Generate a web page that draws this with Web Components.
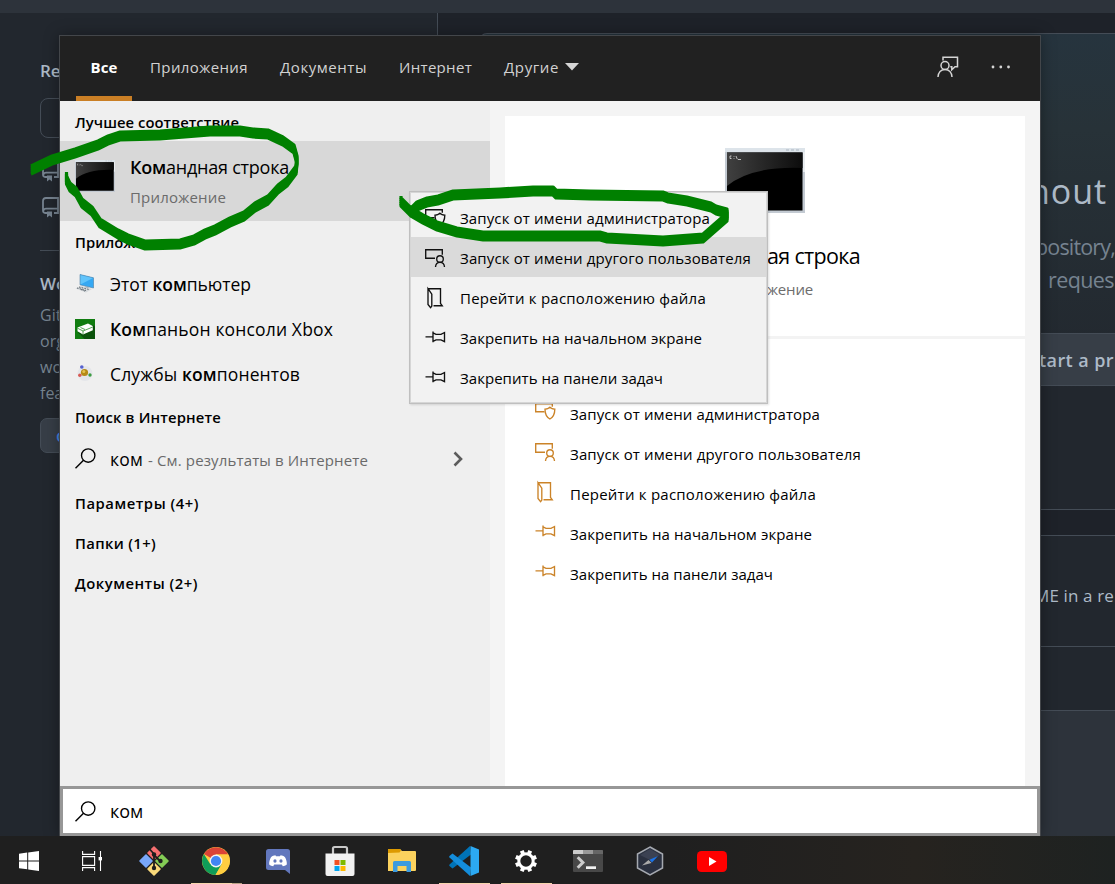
<!DOCTYPE html>
<html lang="ru">
<head>
<meta charset="utf-8">
<title>Поиск</title>
<style>
  html, body { margin: 0; height: 100%; overflow: hidden; background: #22272e; }
  body { font-family: "Open Sans", "Noto Sans", sans-serif; font-size: 15px; }
</style>
</head>
<body>
<desktop-view></desktop-view>
<script>
const fits = [];
function define(name, html, init) {
  const t = document.createElement('template');
  t.innerHTML = html;
  customElements.define(name, class extends HTMLElement {
    constructor() {
      super();
      this.attachShadow({ mode: 'open' }).appendChild(t.content.cloneNode(true));
    }
    connectedCallback() { if (init) init.call(this, this.shadowRoot); }
  });
}

/* Icon set */
const ICONS = {
  admin: [21, 21, '<g class="l"><path d="M9.500 9.700H.7V1.700h16.600v3"/><path d="M10 7.200c2 0 3.600-.6 4.900-1.900 1.300 1.300 2.900 1.900 4.900 1.900 0 5-1.200 7.700-4.900 9.800C11.200 14.900 10 12.200 10 7.200z"/></g>'],
  user: [21, 21, '<g class="l"><path d="M10 10.200H.7V1.700h16.600v5"/><circle cx="15" cy="11" r="3.300"/><path d="M10.500 19c.2-3 1.900-4.600 4.500-4.600s4.300 1.600 4.500 4.600"/></g>'],
  folder: [21, 21, '<g class="l"><path d="M3 .7h12.500v14.800l1.700 2.200H8.500M3 .7l3.800 5.400v12l-1.200 1.500L3 16.500z"/></g>'],
  pin: [21, 21, '<g class="l"><path d="M.5 8.900h7.500M8 3.600v10.600M8 4.900l3 1.400h5l3.500-1.800v9.200l-3.500-1.800h-5l-3 1.400"/></g>'],
  search: [21, 21, '<g class="l"><circle cx="13.200" cy="7.500" r="6.700"/><path d="M8.500 12.300L.5 20.300"/></g>'],
  chevron: [10, 16, '<path d="M1.500 1.500L8 8l-6.500 6.500" fill="none" stroke="#5c5c5c" stroke-width="2.600"/>'],
  caret: [14, 8, '<path d="M0 0h14L7 7.500z" fill="#d6d6d6"/>'],
  feedback: [22, 22, '<g fill="none" stroke="#d5d5d5" stroke-width="1.500"><path d="M6 4.500V1.300h14.500v9.400h-2.500l-3.200 3v-3h-1.500"/><circle cx="8" cy="9.500" r="4"/><path d="M1 21c.3-4.500 3-7.500 7-7.500s6.700 3 7 7.500"/></g>'],
  dots: [20, 4, '<g fill="#d5d5d5"><circle cx="2" cy="2" r="1.400"/><circle cx="9.800" cy="2" r="1.400"/><circle cx="17.500" cy="2" r="1.400"/></g>'],
  repo: [18, 22, '<g fill="none" stroke="#768390" stroke-width="1.800"><path d="M5 16H3.200C1.500 16 1 15 1 13.500V4c0-2 1-3 3-3h12v15h-4M1.500 13.500c.5-1.300 1.300-1.800 2.500-1.800h12"/></g><path d="M5 14.500h5v6l-2.500-2L5 20.500z" fill="#768390"/>'],
  pc: [20, 20, '<path d="M5 .5l13.500 3.300V14L5 10.800z" fill="#35a8f3"/><path d="M5 .5l13.500 3.300-13.500 7z" fill="#61c4fb"/><path d="M5 .5l13.500 3.300V14L5 10.800z" fill="none" stroke="#4b7da6" stroke-width=".6"/><path d="M10 12.500l4 1-2 2.500-3-1z" fill="#9aa6b0"/><path d="M.5 14.500L6 12l11 3-6 3.500z" fill="#d5d9dc"/><path d="M2 14l9 2.500M4 13l10 2.500M6 15.500l5 2" stroke="#59636b" stroke-width="1" stroke-dasharray="1.500 1.300"/>'],
  xbox: [20, 20, '<path d="M0 0h20v20H0z" fill="#107c10"/><path d="M3 13.500l6.500 6.500H20V7.500L17.500 6z" fill="#0a520b"/><path d="M2.500 8.500L13 4.500l4.800 2.400v4.300L8 15.500l-5.500-3.200z" fill="#fff"/><path d="M2.500 9.200L8 12l9.800-4M8 12v3.500M5.500 8.500l4.500 2" stroke="#107c10" stroke-width=".7" fill="none"/>'],
  com: [20, 20, '<circle cx="10" cy="9.500" r="7.500" fill="#e4e6ea"/><circle cx="9.500" cy="8.500" r="3.600" fill="#b58a16"/><circle cx="8.800" cy="7.500" r="1.500" fill="#e5c24e"/><circle cx="6.800" cy="3" r="1.800" fill="#5560cf"/><circle cx="4.800" cy="11.300" r="1.700" fill="#d85a53"/><circle cx="15" cy="11" r="1.700" fill="#3d9c42"/>'],
  win: [20, 20, '<path d="M0 2.800L8.200 1.600v7.900H0zM9.200 1.400L20 0v9.500H9.200zM0 10.500h8.200v7.800L0 17.200zM9.200 10.500H20V20L9.200 18.500z" fill="#fff"/>'],
  task: [20, 20, '<g fill="none" stroke="#fff" stroke-width="1.100"><path d="M.6 0v3.400h12V0M.6 20v-3.400h12V20M.6 5.600h12v8.800H.6zM18.500 0v20"/></g><path d="M16.600 6h3.400v3.400h-3.400z" fill="#fff"/>'],
  git: [30, 30, '<g stroke-linejoin="round" stroke-width="1.600"><path d="M15 1l6 6-6 6-6-6z" fill="#f66f70" stroke="#f66f70"/><path d="M7 9l6 6-6 6-6-6z" fill="#79a8fa" stroke="#79a8fa"/><path d="M23 9l6 6-6 6-6-6z" fill="#84cc55" stroke="#84cc55"/><path d="M15 17l6 6-6 6-6-6z" fill="#fad97a" stroke="#fad97a"/></g><path d="M10.500 3l4.500 5v14M15 9l6 6" stroke="#1e1e1e" stroke-width="1.800" fill="none"/><circle cx="15" cy="8.500" r="2.200" fill="#1e1e1e"/><circle cx="15" cy="22" r="2.200" fill="#1e1e1e"/><circle cx="21.500" cy="15" r="2.200" fill="#1e1e1e"/>'],
  chrome: [28, 28, '<circle cx="14" cy="14" r="14" fill="#ffcd40"/><path d="M14 14L1.900 7A14 14 0 0 1 26.100 7.500H14z" fill="#db4437"/><path d="M1.900 7A14 14 0 0 0 13.500 28l6.200-10.700L14 14l-5.700 3.300z" fill="#0f9d58"/><path d="M14 7.500h12.100A14 14 0 0 1 13.500 28l6.200-10.800z" fill="#ffcd40"/><circle cx="14" cy="14" r="6.400" fill="#f4f4f4"/><circle cx="14" cy="14" r="5.100" fill="#4285f4"/>'],
  discord: [24, 25, '<path d="M2.500 0h19A2.500 2.500 0 0 1 24 2.500V25l-5-4H2.500A2.500 2.500 0 0 1 0 18.500v-16A2.500 2.500 0 0 1 2.500 0z" fill="#6277bd"/><path d="M5 8.200C6.500 6.800 8 6.400 9.400 6.200l.6 1.100h4l.6-1.100c1.400.2 2.900.6 4.400 2 1.400 2.500 2 5 1.800 7.300-1.300 1.100-2.700 1.600-4 1.700l-1-1.600H8.200l-1 1.600c-1.300-.1-2.700-.6-4-1.700C3 13.200 3.600 10.700 5 8.200z" fill="#fff"/><ellipse cx="9" cy="12" rx="1.600" ry="1.800" fill="#6277bd"/><ellipse cx="15" cy="12" rx="1.600" ry="1.800" fill="#6277bd"/>'],
  store: [30, 30, '<path d="M8 9V2.500Q8 1 9.500 1h11Q22 1 22 2.500V9" fill="none" stroke="#c9c9c9" stroke-width="2.200"/><path d="M.5 7.500h29V28a2 2 0 0 1-2 2h-25a2 2 0 0 1-2-2z" fill="#f1f1f1"/><path d="M9.500 14h5v5h-5z" fill="#f25022"/><path d="M15.500 14h5v5h-5z" fill="#7fba00"/><path d="M9.500 20h5v5h-5z" fill="#00a4ef"/><path d="M15.500 20h5v5h-5z" fill="#ffb900"/>'],
  files: [28, 24, '<path d="M0 2V1q0-1 1-1h11l2 2h13q1 0 1 1v18q0 1-1 1H0z" fill="#fbd25e"/><path d="M0 4V1q0-1 1-1h11l1 1.500L11.500 3.500z" fill="#dd9a00"/><path d="M5 23V13.500q0-1.500 1.500-1.500h15q1.500 0 1.500 1.500V23h-4.500v-6h-9v6z" fill="#3c9be0"/>'],
  code: [30, 30, '<path d="M22 8.500L3.500 22.500 0.500 20q-.7-.8 0-1.600L21 0z" fill="#0073b7"/><path d="M22 21.500L3.500 7.500.5 10q-.7.800 0 1.600L21 30z" fill="#148ddb"/><path d="M21.500 0L30 3.500v23L21.500 30z" fill="#2ca9f2"/>'],
  gear: [24, 24, '<g stroke="#fff" stroke-width="4"><path d="M12 5V1" transform="rotate(22.500 12 12)"/><path d="M12 5V1" transform="rotate(67.500 12 12)"/><path d="M12 5V1" transform="rotate(112.500 12 12)"/><path d="M12 5V1" transform="rotate(157.500 12 12)"/><path d="M12 5V1" transform="rotate(202.500 12 12)"/><path d="M12 5V1" transform="rotate(247.500 12 12)"/><path d="M12 5V1" transform="rotate(292.500 12 12)"/><path d="M12 5V1" transform="rotate(337.500 12 12)"/></g><circle cx="12" cy="12" r="7.200" fill="none" stroke="#fff" stroke-width="3"/>'],
  term: [30, 22, '<rect width="30" height="22" rx="1" fill="#484848"/><path d="M0 4V1q0-1 1-1h9v4z" fill="#ccc"/><path d="M10 0h10v4H10z" fill="#999"/><path d="M20 0h9q1 0 1 1v3H20z" fill="#666"/><path d="M4.700 7.200l5.200 5.300-5.200 5.300" fill="none" stroke="#ccc" stroke-width="3"/><path d="M13 16.300h10v2.700H13z" fill="#f2f2f2"/>'],
  hexa: [28, 30, '<path d="M14 1l12.500 7v14L14 29 1.500 22V8z" fill="#2a303f" stroke="#a5a9b0" stroke-width="1.500"/><path d="M14 3l10 6-10 5L4 9z" fill="#3b4152"/><path d="M6 19.500l6.500-5.500 3 3z" fill="#aaa"/><path d="M22 10l-8.500 3.800 2.500 2.700z" fill="#1a73e8"/>'],
  youtube: [30, 21, '<rect width="30" height="21" rx="4.500" fill="#f00"/><path d="M12 6l7.500 4.500L12 15z" fill="#fff"/>'],
  cmd: [80, 65, '<path d="M0 0h80v65H0z" fill="#c3cad2"/><path d="M0 0h80v4H0z" fill="#dde4ea"/><path d="M78 4h2v20h-2z" fill="#e9edf0"/><path d="M2 4.500h75.500v58H2z" fill="#000"/><linearGradient id="g"><stop stop-color="#404040"/><stop offset="1" stop-color="#0c0c0c"/></linearGradient><path d="M2 4.500h75.500V20Q26 18 2 38z" fill="url(#g)"/><path d="M6.500 8H5v2.500h1.500M9 8.300v.7M9 10.100v.7M11 8l1.200 3M12.800 11.500H16" fill="none" stroke="#ddd" stroke-width=".8"/><path d="M61 2h3m2 0h3m2 0h3" stroke="#aab5c0"/>']
};

define('ui-icon', `<style>
  :host { display: inline-block; flex: none; line-height: 0; }
  svg { display: block; overflow: visible; }
  .l { fill: none; stroke: currentColor; stroke-width: 1.350; }
</style><span></span>`, function (r) {
  const [w, h, body] = ICONS[this.getAttribute('name')];
  const W = this.getAttribute('w') || w, H = this.getAttribute('h') || h;
  r.querySelector('span').innerHTML = `<svg width="${W}" height="${H}" viewBox="0 0 ${w} ${h}" preserveAspectRatio="none">${body}</svg>`;
});

/* Label whose tracking is adjusted to a given width */
define('fit-text', `<style>:host { display: inline-block; white-space: pre; flex: none; }</style><slot></slot>`,
  function () { fits.push(this); });

define('repo-page', `<style>
  :host { display: grid; grid-template: 13px 1fr / 438px 1fr; height: 836px; color: #adbac7; background: #1e2229; }
  .top { grid-column: 1 / 3; background: #2d333b; }
  .side { background: #22272e; border-right: 1px solid #444c56; padding: 46px 0 0 40px; overflow: hidden; box-sizing: border-box; }
  .side fit-text { display: block; }
  .h { font-weight: 600; line-height: 24px; font-size: 17px; }
  .box { width: 300px; height: 38px; margin-top: 15px; border: 1px solid #444c56; border-radius: 8px; display: flex; align-items: center; padding-left: 17px; color: #4f6578; font-size: 15px; }
  .repos { display: flex; flex-direction: column; gap: 14px; padding: 23px 0 0 2px; }
  hr { border: 0; border-top: 1px solid #444c56; margin: 31px 0 21px; }
  .p { color: #768390; font-size: 16px; line-height: 26px; margin-top: 6px; }
  .btn { width: 200px; height: 33px; margin-top: 12px; background: #373e47; border: 1px solid #444c56; border-radius: 7px; color: #4184e4; font-weight: 600; display: flex; align-items: center; padding-left: 15px; }
  .main { display: flex; flex-direction: column; padding-top: 20px; overflow: hidden; }
  .hero { box-sizing: border-box; height: 477px; margin-left: 41px; border: 1px solid #444c56; border-right: 0; border-radius: 8px 0 0 0; background: linear-gradient(#26343e, #273238 20%, #22272e 75%); display: flex; flex-direction: column; padding-left: 559px; }
  .hero fit-text { display: block; }
  .t1 { font-size: 34px; line-height: 50px; margin: 132px 0 0 -10px; }
  .t2 { font-size: 21.500px; line-height: 33px; color: #768390; margin: 14px 0 0 -4px; }
  .t3 { font-size: 21.500px; line-height: 33px; color: #768390; margin-left: 9px; }
  .start { height: 51px; margin-top: 37px; background: #373e47; border: solid #444c56; border-width: 1px 0; display: flex; align-items: center; font-weight: 600; font-size: 18px; }
  .row { box-sizing: border-box; margin-left: 41px; border-top: 1px solid #444c56; background: #22272e; }
  .a { margin-top: 25px; height: 111px; padding: 47px 0 0 555px; font-size: 17px; line-height: 26px; }
  .b { height: 64px; } .c { background: #2d333b; flex: 1; }
</style>
<div class="top"></div>
<div class="side">
  <fit-text class="h">Re</fit-text>
  <div class="box">F</div>
  <div class="repos"><ui-icon name="repo"></ui-icon><ui-icon name="repo"></ui-icon></div>
  <hr>
  <fit-text class="h">Wo</fit-text>
  <div class="p">Git<br>org<br>wo<br>fea</div>
  <div class="btn">C</div>
</div>
<div class="main">
  <div class="hero">
    <fit-text class="t1" w="78">hout</fit-text>
    <fit-text class="t2" w="80">pository,</fit-text>
    <fit-text class="t3" w="66">reques</fit-text>
    <div class="start"><fit-text w="75">tart a pr</fit-text></div>
  </div>
  <div class="row a"><fit-text w="80">ME in a re</fit-text></div>
  <div class="row b"></div>
  <div class="row c"></div>
</div>`);

define('search-tabs', `<style>
  :host { box-sizing: border-box; display: flex; height: 65px; background: #212121; color: #d2d2d2; font-size: 15px; padding-left: 16px; }
  div { box-sizing: border-box; height: 65px; display: flex; align-items: center; padding: 0 0 4px 18px; }
  div.on { width: 56px; justify-content: center; border-bottom: 5px solid #ca7f25; padding: 1px 0 0; color: #fff; font-weight: 700; }
  .tools { margin-left: auto; gap: 32px; padding: 0 29px 3px 0; }
</style>
<div class="on"><fit-text w="27">Все</fit-text></div>
<div><fit-text w="98">Приложения</fit-text></div>
<div style="padding-left:32px"><fit-text w="87">Документы</fit-text></div>
<div style="padding-left:32px"><fit-text w="73">Интернет</fit-text></div>
<div style="padding-left:32px;gap:6px"><fit-text w="55">Другие</fit-text><ui-icon name="caret"></ui-icon></div>
<div class="tools"><ui-icon name="feedback"></ui-icon><ui-icon name="dots"></ui-icon></div>`);

define('section-title', `<style>
  :host { box-sizing: border-box; display: flex; align-items: center; height: 40px; padding: 0 0 0 15px; font-weight: 600; font-size: 14.800px; color: #000; }
</style><slot></slot>`);

define('result-row', `<style>
  :host { box-sizing: border-box; display: flex; align-items: center; gap: 15px; height: 45px; padding: 0 0 0 15px; font-size: 17.500px; color: #000; }
</style><slot name="icon"></slot><slot></slot>`);

define('action-row', `<style>
  :host { box-sizing: border-box; display: flex; align-items: center; gap: 14px; height: 40px; padding-left: var(--inset, 30px); font-size: 15px; color: #000; }
  span { flex: none; color: var(--tint, #cb8328); margin-top: var(--lift, -5px); }
</style><span></span><slot></slot>`, function (r) {
  r.querySelector('span').innerHTML = `<ui-icon name="${this.getAttribute('icon')}" style="display:block"></ui-icon>`;
});

const actions = `
<action-row icon="admin"><fit-text w="250">Запуск от имени администратора</fit-text></action-row>
<action-row icon="user" class="hot"><fit-text w="291">Запуск от имени другого пользователя</fit-text></action-row>
<action-row icon="folder"><fit-text w="246">Перейти к расположению файла</fit-text></action-row>
<action-row icon="pin"><fit-text w="242">Закрепить на начальном экране</fit-text></action-row>
<action-row icon="pin"><fit-text w="203">Закрепить на панели задач</fit-text></action-row>`;

define('context-menu', `<style>
  :host { box-sizing: border-box; display: block; width: 359px; height: 213px; padding: 5px 0 0; background: #f2f2f2; border: 1px solid #bfbfbf; box-shadow: inset 0 0 0 1px #d6d6d6, 1px 1px 2px rgba(0,0,0,.12); --inset: 15px; --tint: #111; --lift: 0px; }
  action-row { padding-top: 2px; }
  .hot { background: #dadada; margin: 0 1px; --inset: 14px; }
</style>${actions}`);

define('preview-card', `<style>
  :host { box-sizing: border-box; display: flex; flex-direction: column; height: 670px; background: #fff; color: #000; --lift: -3px; }
  .app { box-sizing: border-box; height: 223px; border-bottom: 3px solid #f3f3f3; display: flex; flex-direction: column; align-items: center; padding-top: 32px; }
  .n, .k { align-self: flex-start; margin-left: 262px; }
  .n { font-size: 21.500px; line-height: 32px; margin-top: 27px; }
  .k { font-size: 15px; line-height: 20px; margin-top: 7px; color: #6d6d6d; }
  .list { padding-top: 55px; }
</style>
<div class="app"><ui-icon name="cmd"></ui-icon><fit-text class="n" w="93">ая строка</fit-text><fit-text class="k" w="46">жение</fit-text></div>
<div class="list">${actions}</div>`);

define('search-window', `<style>
  :host { box-sizing: border-box; display: flex; flex-direction: column; width: 982px; height: 801px; border: 1px solid #43464a; border-bottom: 0; box-shadow: 0 0 14px rgba(0,0,0,.35); background: #efefef; }
  .body { display: grid; grid-template-columns: 430px 1fr; height: 685px; }
  .list { background: #efefef; }
  .side { background: #f4f4f4; padding: 15px 15px 0; }
  .best { box-sizing: border-box; height: 80px; background: #d8d8d8; display: flex; gap: 15px; padding: 19px 0 0 15px; }
  .best .n { display: block; font-size: 18px; line-height: 26px; margin-top: -6px; color: #000; }
  .best .k { display: block; line-height: 22px; margin-top: 6px; color: #6b6b6b; }
  b { font-weight: 600; }
  .web { color: #6a6a6a; font-size: 15px; margin-left: -10px; }
  .box { box-sizing: border-box; height: 50px; border: 3px solid #979797; background: #fff; display: flex; align-items: center; gap: 14px; padding-left: 12px; font-size: 18px; }
</style>
<search-tabs></search-tabs>
<div class="body">
  <div class="list">
    <section-title style="padding-top:1px"><fit-text w="164">Лучшее соответствие</fit-text></section-title>
    <div class="best"><ui-icon name="cmd" w="40" h="32"></ui-icon><div><fit-text class="n" w="159"><b>Ком</b>андная строка</fit-text><fit-text class="k" w="96">Приложение</fit-text></div></div>
    <section-title style="padding-top:1px"><fit-text w="97">Приложения</fit-text></section-title>
    <result-row><ui-icon slot="icon" name="pc"></ui-icon><fit-text w="141">Этот <b>ком</b>пьютер</fit-text></result-row>
    <result-row><ui-icon slot="icon" name="xbox"></ui-icon><fit-text w="223"><b>Ком</b>паньон консоли Xbox</fit-text></result-row>
    <result-row><ui-icon slot="icon" name="com"></ui-icon><fit-text w="190">Службы <b>ком</b>понентов</fit-text></result-row>
    <section-title style="padding-top:2px"><fit-text w="146">Поиск в Интернете</fit-text></section-title>
    <result-row style="height:46px;padding-bottom:1px"><ui-icon slot="icon" name="search"></ui-icon><fit-text w="33" style="margin-left:-1px">ком</fit-text><fit-text class="web" w="220" style="margin-top:2px">- См. результаты в Интернете</fit-text><ui-icon name="chevron" style="margin-left:70px"></ui-icon></result-row>
    <section-title style="padding-top:2px"><fit-text w="124">Параметры (4+)</fit-text></section-title>
    <section-title style="padding-top:2px"><fit-text w="81">Папки (1+)</fit-text></section-title>
    <section-title style="padding-top:2px"><fit-text w="123">Документы (2+)</fit-text></section-title>
  </div>
  <div class="side"><preview-card></preview-card></div>
</div>
<div class="box"><ui-icon name="search"></ui-icon><fit-text w="33">ком</fit-text></div>`);

define('task-bar', `<style>
  :host { display: grid; grid-template-columns: 61px 62px repeat(10, 62px); height: 48px; background: linear-gradient(90deg, #1f1f1f 0 60%, #26231f 82%, #1e2221); }
  div { box-sizing: border-box; display: flex; align-items: center; justify-content: center; padding-top: 2px; }
  div:nth-child(1) { padding-left: 0; padding-right: 0; justify-content: flex-start; padding-left: 20px; }
  div:nth-child(2) { justify-content: flex-start; padding-left: 19px; }
  .run { background: linear-gradient(#f6d5ac, #f6d5ac) 6px 100% / 51px 1px no-repeat; }
  .many { background: linear-gradient(90deg, #f6d5ac 41px, #b7a083 41px) 6px 100% / 51px 1px no-repeat; }
</style>
<div><ui-icon name="win"></ui-icon></div><div><ui-icon name="task"></ui-icon></div><div><ui-icon name="git"></ui-icon></div>
<div class="many"><ui-icon name="chrome"></ui-icon></div><div><ui-icon name="discord"></ui-icon></div><div><ui-icon name="store"></ui-icon></div>
<div><ui-icon name="files"></ui-icon></div><div class="run"><ui-icon name="code"></ui-icon></div><div class="run"><ui-icon name="gear"></ui-icon></div>
<div><ui-icon name="term"></ui-icon></div><div><ui-icon name="hexa"></ui-icon></div><div><ui-icon name="youtube"></ui-icon></div>`);

/* Hand-drawn marks: a tall narrow nib made of stacked strokes */
define('ink-marks', `<style>:host { display: block; pointer-events: none; } svg { display: block; }</style>
<svg width="1115" height="884" fill="none" stroke="#008000" stroke-width="3.200" stroke-linejoin="round">
<defs><g id="ink">
<path d="M31 170L52 160 75 153 98 145 108 140 120 136 160 135 210 131 240 131 253 133 268 134 283 141 294 149 297 160 296 170 287 182 278 189 268 200 255 207 244 216 230 222 215 230 205 234 194 240 180 244 145 245 128 239 118 234 100 223 92 211 82 203 76 192 70 187 66.500 180V176"/>
<path d="M401 200V202L406 207 411 212 417 206 427 202 438 200 453 195 500 193 533 191 553 191 556 194 590 195 663 196 668 198 687 201 711 207 716 210 727 213 727 217 711 231 703 238 663 241 607 238 600 236 523 236 483 236 457 232 437 226 423 219 411 212"/>
</g></defs>
<use href="#ink" y="-4"/><use href="#ink" y="-2"/><use href="#ink"/><use href="#ink" y="2"/><use href="#ink" y="4"/>
</svg>`);

define('desktop-view', `<style>
  :host { display: block; position: relative; width: 1115px; height: 884px; overflow: hidden; }
  search-window { position: absolute; left: 59px; top: 35px; }
  context-menu { position: absolute; left: 409px; top: 191px; }
  task-bar { position: relative; }
  ink-marks { position: absolute; left: 0; top: 0; }
</style>
<repo-page></repo-page>
<search-window></search-window>
<task-bar></task-bar>
<context-menu></context-menu>
<ink-marks></ink-marks>`);

for (const el of fits) {
  const w = parseFloat(el.getAttribute('w'));
  if (!w) continue;
  const range = document.createRange();
  range.selectNodeContents(el);
  const natural = range.getBoundingClientRect().width;
  el.style.letterSpacing = ((w - natural) / el.textContent.length).toFixed(3) + 'px';
}
</script>
</body>
</html>
